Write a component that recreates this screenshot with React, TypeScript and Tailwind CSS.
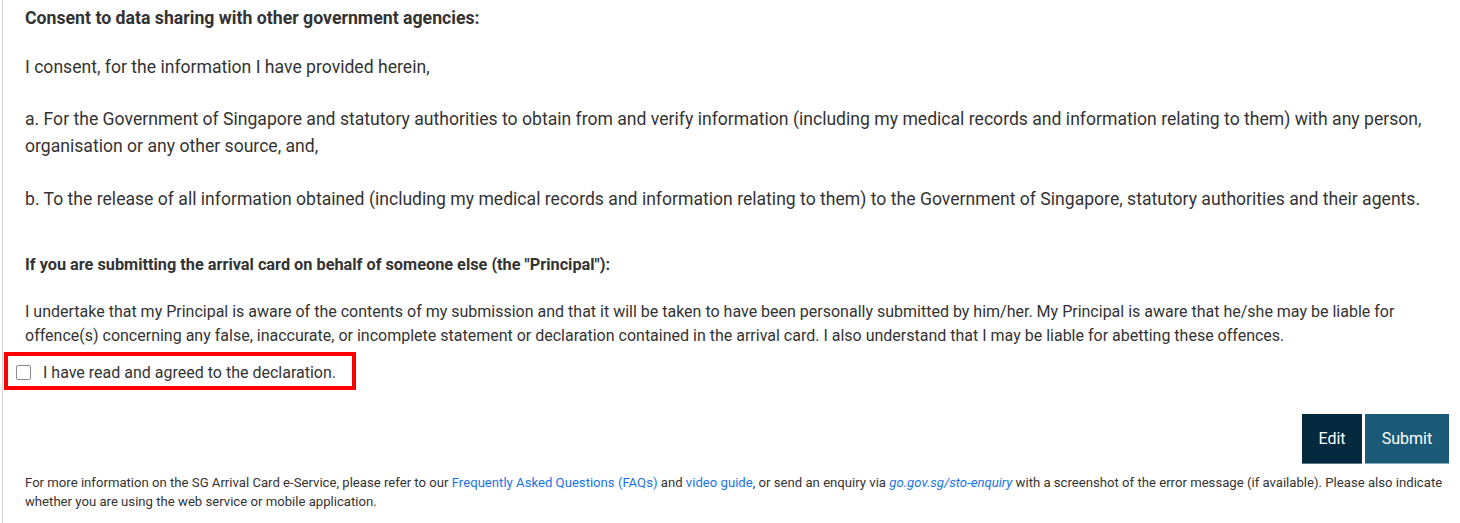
import React from 'react';

const font = { fontFamily: 'Roboto, "Liberation Sans", sans-serif' };

export default function App() {
  return (
    <div className="min-h-screen bg-white text-[#333] flex" style={font}>
      <div className="w-[2px] shrink-0" />
      <div className="w-px shrink-0 bg-[#d4d4d4]" />
      <div className="flex-1">
        <div className="pl-[22px] pr-[20px] pt-[6px]">
          <p className="text-[17.7px] font-bold leading-[24px]">Consent to data sharing with other government agencies:</p>
          <p className="mt-[24px] text-[17.6px] leading-[27px]">I consent, for the information I have provided herein,</p>
          <p className="mt-[25px] text-[17.6px] leading-[27px]">
            a. For the Government of Singapore and statutory authorities to obtain from and verify information (including my medical records and information relating to them) with any person, organisation or any other source, and,
          </p>
          <p className="mt-[26px] text-[17.6px] leading-[27px]">
            b. To the release of all information obtained (including my medical records and information relating to them) to the Government of Singapore, statutory authorities and their agents.
          </p>
          <p className="mt-[40px] text-[16.3px] font-bold leading-[24px]">If you are submitting the arrival card on behalf of someone else (the "Principal"):</p>
          <p className="mt-[23px] text-[16px] leading-[24px]">
            I undertake that my Principal is aware of the contents of my submission and that it will be taken to have been personally submitted by him/her. My Principal is aware that he/she may be liable for offence(s) concerning any false, inaccurate, or incomplete statement or declaration contained in the arrival card. I also understand that I may be liable for abetting these offences.
          </p>
        </div>

        <div className="mt-[4px] ml-[1px] w-[352px] h-[38px] border-[4px] border-[#ff0000] flex items-center pt-[3px] pl-[8px] gap-[12px]">
          <span className="w-[15px] h-[15px] rounded-[2px] border border-[#8a8a8a] bg-white shrink-0" />
          <span className="text-[16px] leading-[24px]">I have read and agreed to the declaration.</span>
        </div>

        <div className="mt-[24px] flex justify-end gap-[3px] pr-[11px]">
          <button className="h-[50px] w-[60px] bg-[#052a40] text-white text-[16px] border-b border-[#5b7484]">Edit</button>
          <button className="h-[50px] w-[84px] bg-[#1b5a76] text-white text-[16px] border-b border-[#8aa9b8]">Submit</button>
        </div>

        <p className="mt-[9px] pl-[22px] pr-[8px] text-[13.15px] leading-[19px] text-[#333]">
          For more information on the SG Arrival Card e-Service, please refer to our{' '}
          <a className="text-[#1a73e8]" href="#">Frequently Asked Questions (FAQs)</a> and{' '}
          <a className="text-[#1a73e8]" href="#">video guide</a>, or send an enquiry via{' '}
          <a className="text-[#1a73e8] italic" href="#">go.gov.sg/sto-enquiry</a> with a screenshot of the error message (if available). Please also indicate whether you are using the web service or mobile application.
        </p>
      </div>
    </div>
  );
}
